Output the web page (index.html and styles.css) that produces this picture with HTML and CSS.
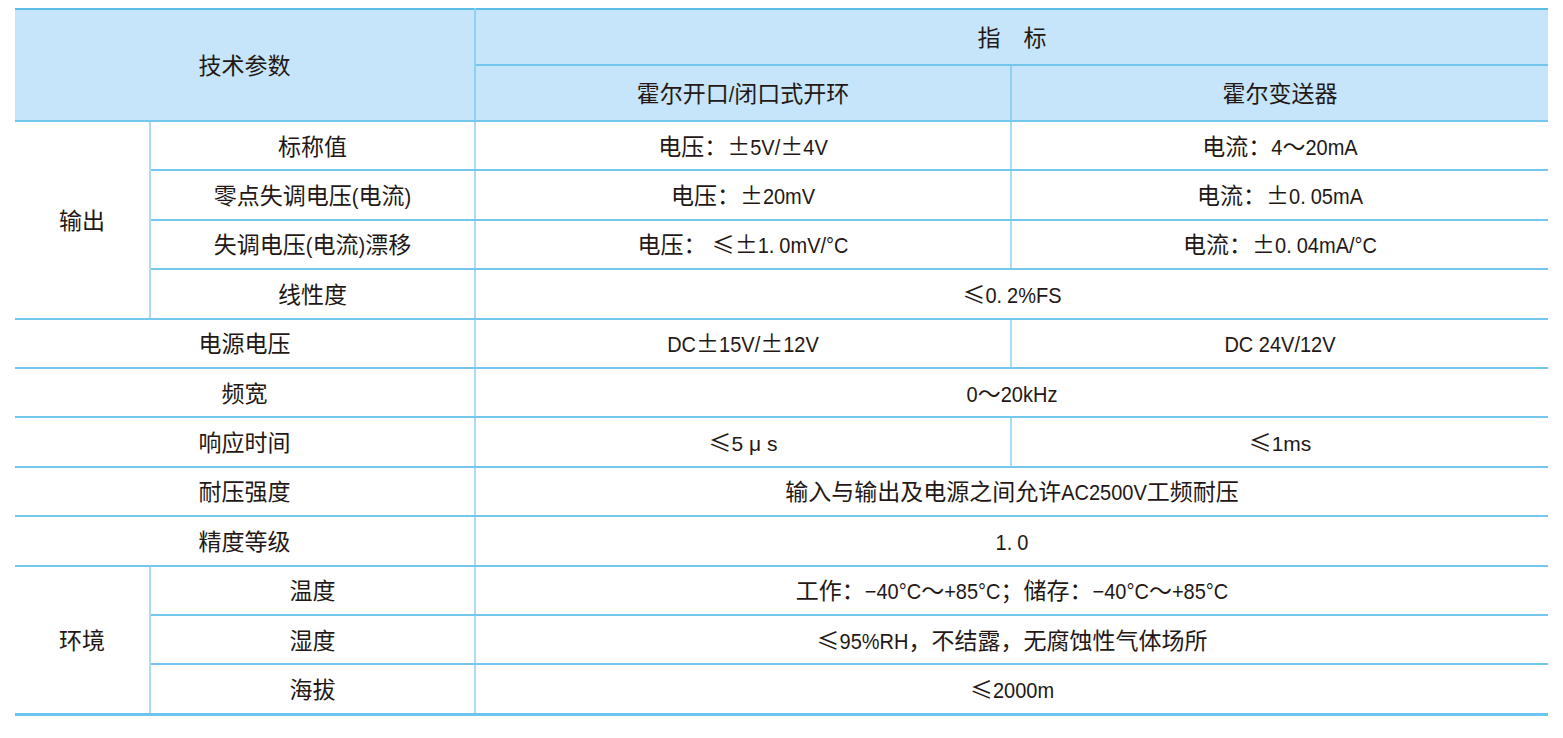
FILE: index.html
```html
<!DOCTYPE html>
<html lang="zh-CN">
<head>
<meta charset="utf-8">
<title>技术参数</title>
<link rel="stylesheet" href="styles.css">
</head>
<body>
<table class="spec">
  <colgroup>
    <col class="c1"><col class="c2"><col class="c3"><col class="c4">
  </colgroup>
  <thead>
    <tr class="h1">
      <th colspan="2" rowspan="2" class="first">技术参数</th>
      <th colspan="2" class="last">指　标</th>
    </tr>
    <tr class="h2">
      <th>霍尔开口<span class="n">/</span>闭口式开环</th>
      <th class="last">霍尔变送器</th>
    </tr>
  </thead>
  <tbody>
    <tr>
      <td rowspan="4" class="first">输出</td>
      <td>标称值</td>
      <td>电压：±<span class="n">5V/</span>±<span class="n">4V</span></td>
      <td class="last">电流：<span class="n">4</span>～<span class="n">20mA</span></td>
    </tr>
    <tr>
      <td>零点失调电压<span class="n">(</span>电流<span class="n">)</span></td>
      <td>电压：±<span class="n">20mV</span></td>
      <td class="last">电流：±<span class="n">0.<span class="d">05mA</span></span></td>
    </tr>
    <tr>
      <td>失调电压<span class="n">(</span>电流<span class="n">)</span>漂移</td>
      <td>电压：&nbsp;≤±<span class="n">1.<span class="d">0mV/°C</span></span></td>
      <td class="last">电流：±<span class="n">0.<span class="d">04mA/°C</span></span></td>
    </tr>
    <tr>
      <td>线性度</td>
      <td colspan="2" class="last">≤<span class="n">0.<span class="d">2%FS</span></span></td>
    </tr>
    <tr>
      <td colspan="2" class="first">电源电压</td>
      <td><span class="n">DC</span>±<span class="n">15V/</span>±<span class="n">12V</span></td>
      <td class="last"><span class="n">DC 24V/12V</span></td>
    </tr>
    <tr>
      <td colspan="2" class="first">频宽</td>
      <td colspan="2" class="last"><span class="n">0</span>～<span class="n">20kHz</span></td>
    </tr>
    <tr>
      <td colspan="2" class="first">响应时间</td>
      <td>≤<span class="reg">5 μ s</span></td>
      <td class="last">≤<span class="reg">1ms</span></td>
    </tr>
    <tr>
      <td colspan="2" class="first">耐压强度</td>
      <td colspan="2" class="last">输入与输出及电源之间允许<span class="n">AC2500V</span>工频耐压</td>
    </tr>
    <tr>
      <td colspan="2" class="first">精度等级</td>
      <td colspan="2" class="last"><span class="n">1.<span class="d">0</span></span></td>
    </tr>
    <tr>
      <td rowspan="3" class="first">环境</td>
      <td>温度</td>
      <td colspan="2" class="last">工作：<span class="n">−40°C</span>～<span class="n">+85°C</span>；储存：<span class="n">−40°C</span>～<span class="n">+85°C</span></td>
    </tr>
    <tr>
      <td>湿度</td>
      <td colspan="2" class="last">≤<span class="n">95%RH</span>，不结露，无腐蚀性气体场所</td>
    </tr>
    <tr class="end">
      <td>海拔</td>
      <td colspan="2" class="last">≤<span class="n">2000m</span></td>
    </tr>
  </tbody>
</table>
</body>
</html>
```

FILE: styles.css
```css
html, body {
  margin: 0;
  padding: 0;
  background: #ffffff;
}

body {
  padding: 8px 0 0 15px;
}

.spec {
  border-collapse: collapse;
  table-layout: fixed;
  width: 1533px;
  color: #231815;
  font-family: "Noto Sans CJK SC", sans-serif;
  font-size: 23px;
  line-height: 1.3;
  border-top: 2px solid #5bbde6;
  border-bottom: 3px solid #6cc4ec;
}

.c1 { width: 135px; }
.c2 { width: 325px; }
.c3 { width: 536px; }
.c4 { width: 537px; }

.spec th,
.spec td {
  text-align: center;
  vertical-align: middle;
  padding: 0;
  font-weight: normal;
  border-top: 2px solid #74c6ec;
  border-bottom: 2px solid #74c6ec;
  border-left: 2px solid #aadcf4;
  border-right: 2px solid #aadcf4;
}

.spec th {
  background: #c6e5fa;
  border-left-color: #8fd0f0;
  border-right-color: #8fd0f0;
}

.spec .first { border-left: none; }
.spec .last { border-right: none; }

.spec tr.h1 th { height: 54px; }
.spec tr.h2 th { height: 54px; }
.spec thead tr.h1 th { border-top: 2px solid #5bbde6; }

.spec tbody td { height: 47.4px; }

.spec tbody tr.end td { border-bottom: 3px solid #6cc4ec; }

.n {
  display: inline-block;
  font-family: "Liberation Sans", sans-serif;
  font-size: 20px;
  transform: scaleY(1.08);
  transform-origin: 50% 70%;
}

.d {
  margin-left: 5px;
}

.reg {
  font-family: "Liberation Sans", sans-serif;
  font-size: 21px;
}
```
